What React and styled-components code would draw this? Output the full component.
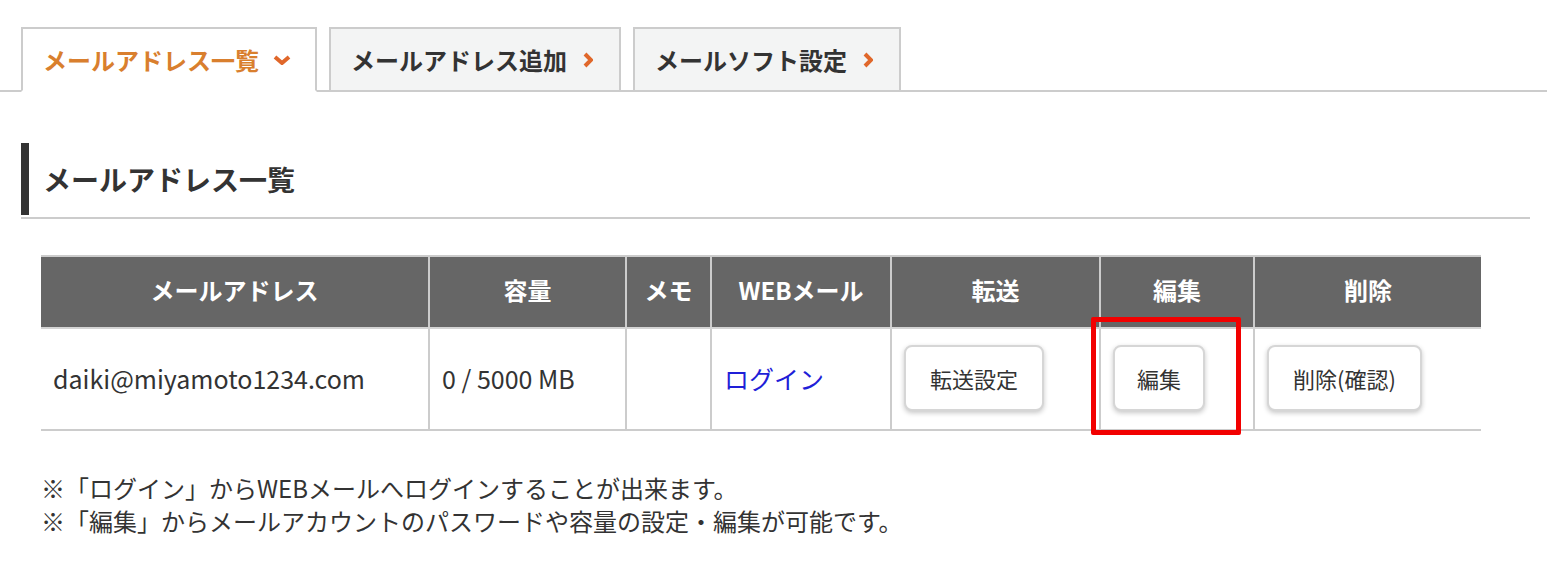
import React from "react";
import styled, { createGlobalStyle } from "styled-components";

const GlobalStyle = createGlobalStyle`
  body {
    margin: 0;
    background: #fff;
    color: #333;
    font-family: "Noto Sans CJK JP", "Noto Sans", sans-serif;
  }
`;

const Page = styled.div`
  padding-top: 27px;
`;

const TabBar = styled.div`
  display: flex;
  gap: 12px;
  padding-left: 21px;
  border-bottom: 2px solid #ccc;
`;

const Tab = styled.div`
  display: flex;
  align-items: center;
  height: 65px;
  box-sizing: border-box;
  padding: 0 ${(p) => (p.active ? 24 : 26)}px 0 20px;
  margin-bottom: -2px;
  border: 2px solid #ccc;
  border-bottom: 2px solid ${(p) => (p.active ? "#fff" : "#ccc")};
  background: ${(p) => (p.active ? "#fff" : "#f3f4f4")};
  color: ${(p) => (p.active ? "#d97f2e" : "#333")};
  font-size: 24px;
  font-weight: 700;
  white-space: nowrap;
  cursor: pointer;
`;

const TabIcon = styled.svg`
  margin-left: ${(p) => (p.down ? "14px" : "16px")};
  flex-shrink: 0;
`;

const HeadingWrap = styled.div`
  margin: 51px 17px 0 21px;
  padding-bottom: 2px;
  border-bottom: 2px solid #ccc;
`;

const Heading = styled.h2`
  margin: 0;
  height: 72px;
  display: flex;
  align-items: center;
  padding-left: 14px;
  border-left: 8px solid #333;
  font-size: 28px;
  font-weight: 700;
  color: #333;
`;

const Table = styled.table`
  margin: 36px 0 0 41px;
  width: 1440px;
  border-collapse: collapse;
  table-layout: fixed;
`;

const Th = styled.th`
  height: 72px;
  box-sizing: border-box;
  background: #666;
  color: #fff;
  font-size: 24px;
  font-weight: 700;
  text-align: center;
  border: 2px solid #ccc;
  border-bottom: 2px solid #d4d4d4;
  padding: 0 0 5px;
  &:first-child { border-left: none; }
  &:last-child { border-right: none; }
`;

const Td = styled.td`
  position: relative;
  height: 102px;
  box-sizing: border-box;
  padding: 0 12px 3px;
  font-size: 25px;
  color: #333;
  border: 2px solid #ccc;
  border-top: none;
  text-align: left;
  &:first-child { border-left: none; }
  &:last-child { border-right: none; }
`;

const LoginLink = styled.a`
  color: #1f1fd8;
  text-decoration: none;
`;

const Button = styled.button`
  height: 66px;
  padding: 0 ${(p) => p.pad || 24}px;
  background: #fff;
  border: 2px solid #d6d6d6;
  border-radius: 8px;
  box-shadow: 0 2px 5px rgba(0, 0, 0, 0.22);
  font-family: inherit;
  font-size: 22px;
  color: #333;
  cursor: pointer;
`;

const Highlight = styled.div`
  position: absolute;
  left: -10px;
  top: -12px;
  width: 150px;
  height: 118px;
  box-sizing: border-box;
  border: 5px solid #f20000;
  border-radius: 2px;
  pointer-events: none;
`;

const Notes = styled.div`
  margin: 40px 0 0 41px;
  font-size: 24px;
  line-height: 33px;
  color: #333;
`;

const ChevronDown = () => (
  <TabIcon down width="18" height="10" viewBox="0 0 18 10">
    <polyline points="2,2 9,8 16,2" fill="none" stroke="#e0672a" strokeWidth="4" />
  </TabIcon>
);

const ChevronRight = () => (
  <TabIcon width="10" height="16" viewBox="0 0 10 16">
    <polyline points="2,2 8,8 2,14" fill="none" stroke="#e0672a" strokeWidth="4" />
  </TabIcon>
);

const columns = [
  { label: "メールアドレス", width: 388 },
  { label: "容量", width: 197 },
  { label: "メモ", width: 85 },
  { label: "WEBメール", width: 180 },
  { label: "転送", width: 209 },
  { label: "編集", width: 154 },
  { label: "削除", width: 227 },
];

export default function App() {
  return (
    <Page>
      <GlobalStyle />
      <TabBar>
        <Tab active>
          メールアドレス一覧
          <ChevronDown />
        </Tab>
        <Tab>
          メールアドレス追加
          <ChevronRight />
        </Tab>
        <Tab>
          メールソフト設定
          <ChevronRight />
        </Tab>
      </TabBar>

      <HeadingWrap>
        <Heading>メールアドレス一覧</Heading>
      </HeadingWrap>

      <Table>
        <colgroup>
          {columns.map((c) => (
            <col key={c.label} style={{ width: c.width }} />
          ))}
        </colgroup>
        <thead>
          <tr>
            {columns.map((c) => (
              <Th key={c.label}>{c.label}</Th>
            ))}
          </tr>
        </thead>
        <tbody>
          <tr>
            <Td>daiki@miyamoto1234.com</Td>
            <Td>0 / 5000 MB</Td>
            <Td></Td>
            <Td>
              <LoginLink href="#">ログイン</LoginLink>
            </Td>
            <Td>
              <Button>転送設定</Button>
            </Td>
            <Td>
              <Button pad={22}>編集</Button>
              <Highlight />
            </Td>
            <Td>
              <Button>削除(確認)</Button>
            </Td>
          </tr>
        </tbody>
      </Table>

      <Notes>
        <div>※「ログイン」からWEBメールへログインすることが出来ます。</div>
        <div>※「編集」からメールアカウントのパスワードや容量の設定・編集が可能です。</div>
      </Notes>
    </Page>
  );
}
